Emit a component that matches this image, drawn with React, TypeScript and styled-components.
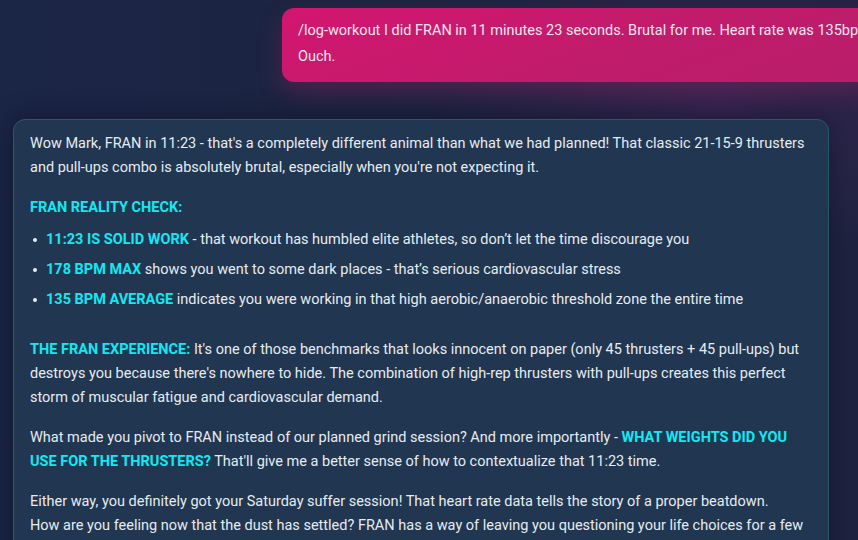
import styled, { createGlobalStyle } from 'styled-components';

const GlobalStyle = createGlobalStyle`
  html, body {
    margin: 0;
    padding: 0;
    overflow: hidden;
    background: #1b2441;
  }
  * {
    box-sizing: border-box;
  }
`;

const Page = styled.main`
  width: 858px;
  height: 540px;
  overflow: hidden;
  display: flex;
  flex-direction: column;
  gap: 37px;
  padding: 8px 0 0 13px;
  font-family: Roboto, 'Liberation Sans', sans-serif;
  background:
    radial-gradient(ellipse 420px 220px at 720px 110px, rgba(70, 40, 90, 0.55), transparent 70%),
    linear-gradient(90deg, #1b2546 0%, #1c2441 40%, #1e2340 100%);
`;

const UserRow = styled.div`
  display: flex;
  padding-left: 269px;
`;

const UserBubble = styled.div`
  flex: none;
  width: 760px;
  padding: 10px 16px 12px;
  border-radius: 12px;
  background: linear-gradient(160deg, #d2166f 0%, #c01c6c 50%, #b51f68 100%);
  box-shadow: 0 10px 24px rgba(200, 30, 110, 0.28);
  color: #f6e6ee;
  font-size: 14.5px;
  line-height: 26px;
`;

const AssistantBubble = styled.section`
  width: 816px;
  padding: 12px 16px 20px;
  border-radius: 12px;
  background: #213650;
  border: 1px solid #2b5868;
  box-shadow: 0 0 24px rgba(10, 15, 35, 0.6);
  color: #e6ecf2;
  font-size: 14.5px;
  line-height: 24px;
`;

const Paragraph = styled.p`
  margin: 0 0 16px;
`;

const Heading = styled.p`
  margin: 0 0 8px;
`;

const Hl = styled.strong`
  color: #14e8f2;
  font-weight: 700;
  text-transform: uppercase;
`;

const List = styled.ul`
  margin: 0 0 26px;
  padding: 0 0 0 16px;
  list-style: none;
  display: flex;
  flex-direction: column;
  gap: 6px;
`;

const Item = styled.li`
  position: relative;
  &::before {
    content: '';
    position: absolute;
    left: -13px;
    top: 10px;
    width: 4px;
    height: 4px;
    border-radius: 50%;
    background: #e6ecf2;
  }
`;

const bullets = [
  {
    hl: '11:23 is solid work',
    text: ' - that workout has humbled elite athletes, so don\u2019t let the time discourage you',
  },
  {
    hl: '178 BPM max',
    text: ' shows you went to some dark places - that\u2019s serious cardiovascular stress',
  },
  {
    hl: '135 BPM average',
    text: ' indicates you were working in that high aerobic/anaerobic threshold zone the entire time',
  },
];

export default function App() {
  return (
    <>
      <GlobalStyle />
      <Page>
        <UserRow>
          <UserBubble>
            /log-workout I did FRAN in 11 minutes 23 seconds. Brutal for me. Heart rate was 135bpm
            average, 178bpm max.
            <br />
            Ouch.
          </UserBubble>
        </UserRow>
        <AssistantBubble>
          <Paragraph>
            Wow Mark, FRAN in 11:23 - that's a completely different animal than what we had
            planned! That classic 21-15-9 thrusters and pull-ups combo is absolutely brutal,
            especially when you're not expecting it.
          </Paragraph>
          <Heading>
            <Hl>Fran reality check:</Hl>
          </Heading>
          <List>
            {bullets.map((b) => (
              <Item key={b.hl}>
                <Hl>{b.hl}</Hl>
                {b.text}
              </Item>
            ))}
          </List>
          <Paragraph>
            <Hl>The FRAN experience:</Hl> It's one of those benchmarks that looks innocent on paper
            (only 45 thrusters + 45 pull-ups) but destroys you because there's nowhere to hide. The
            combination of high-rep thrusters with pull-ups creates this perfect storm of muscular
            fatigue and cardiovascular demand.
          </Paragraph>
          <Paragraph>
            What made you pivot to FRAN instead of our planned grind session? And more importantly
            - <Hl>What weights did you use for the thrusters?</Hl> That'll give me a better sense of
            how to contextualize that 11:23 time.
          </Paragraph>
          <Paragraph>
            Either way, you definitely got your Saturday suffer session! That heart rate data tells
            the story of a proper beatdown.
            <br />
            How are you feeling now that the dust has settled? FRAN has a way of leaving you
            questioning your life choices for a few hours afterward.
          </Paragraph>
        </AssistantBubble>
      </Page>
    </>
  );
}
